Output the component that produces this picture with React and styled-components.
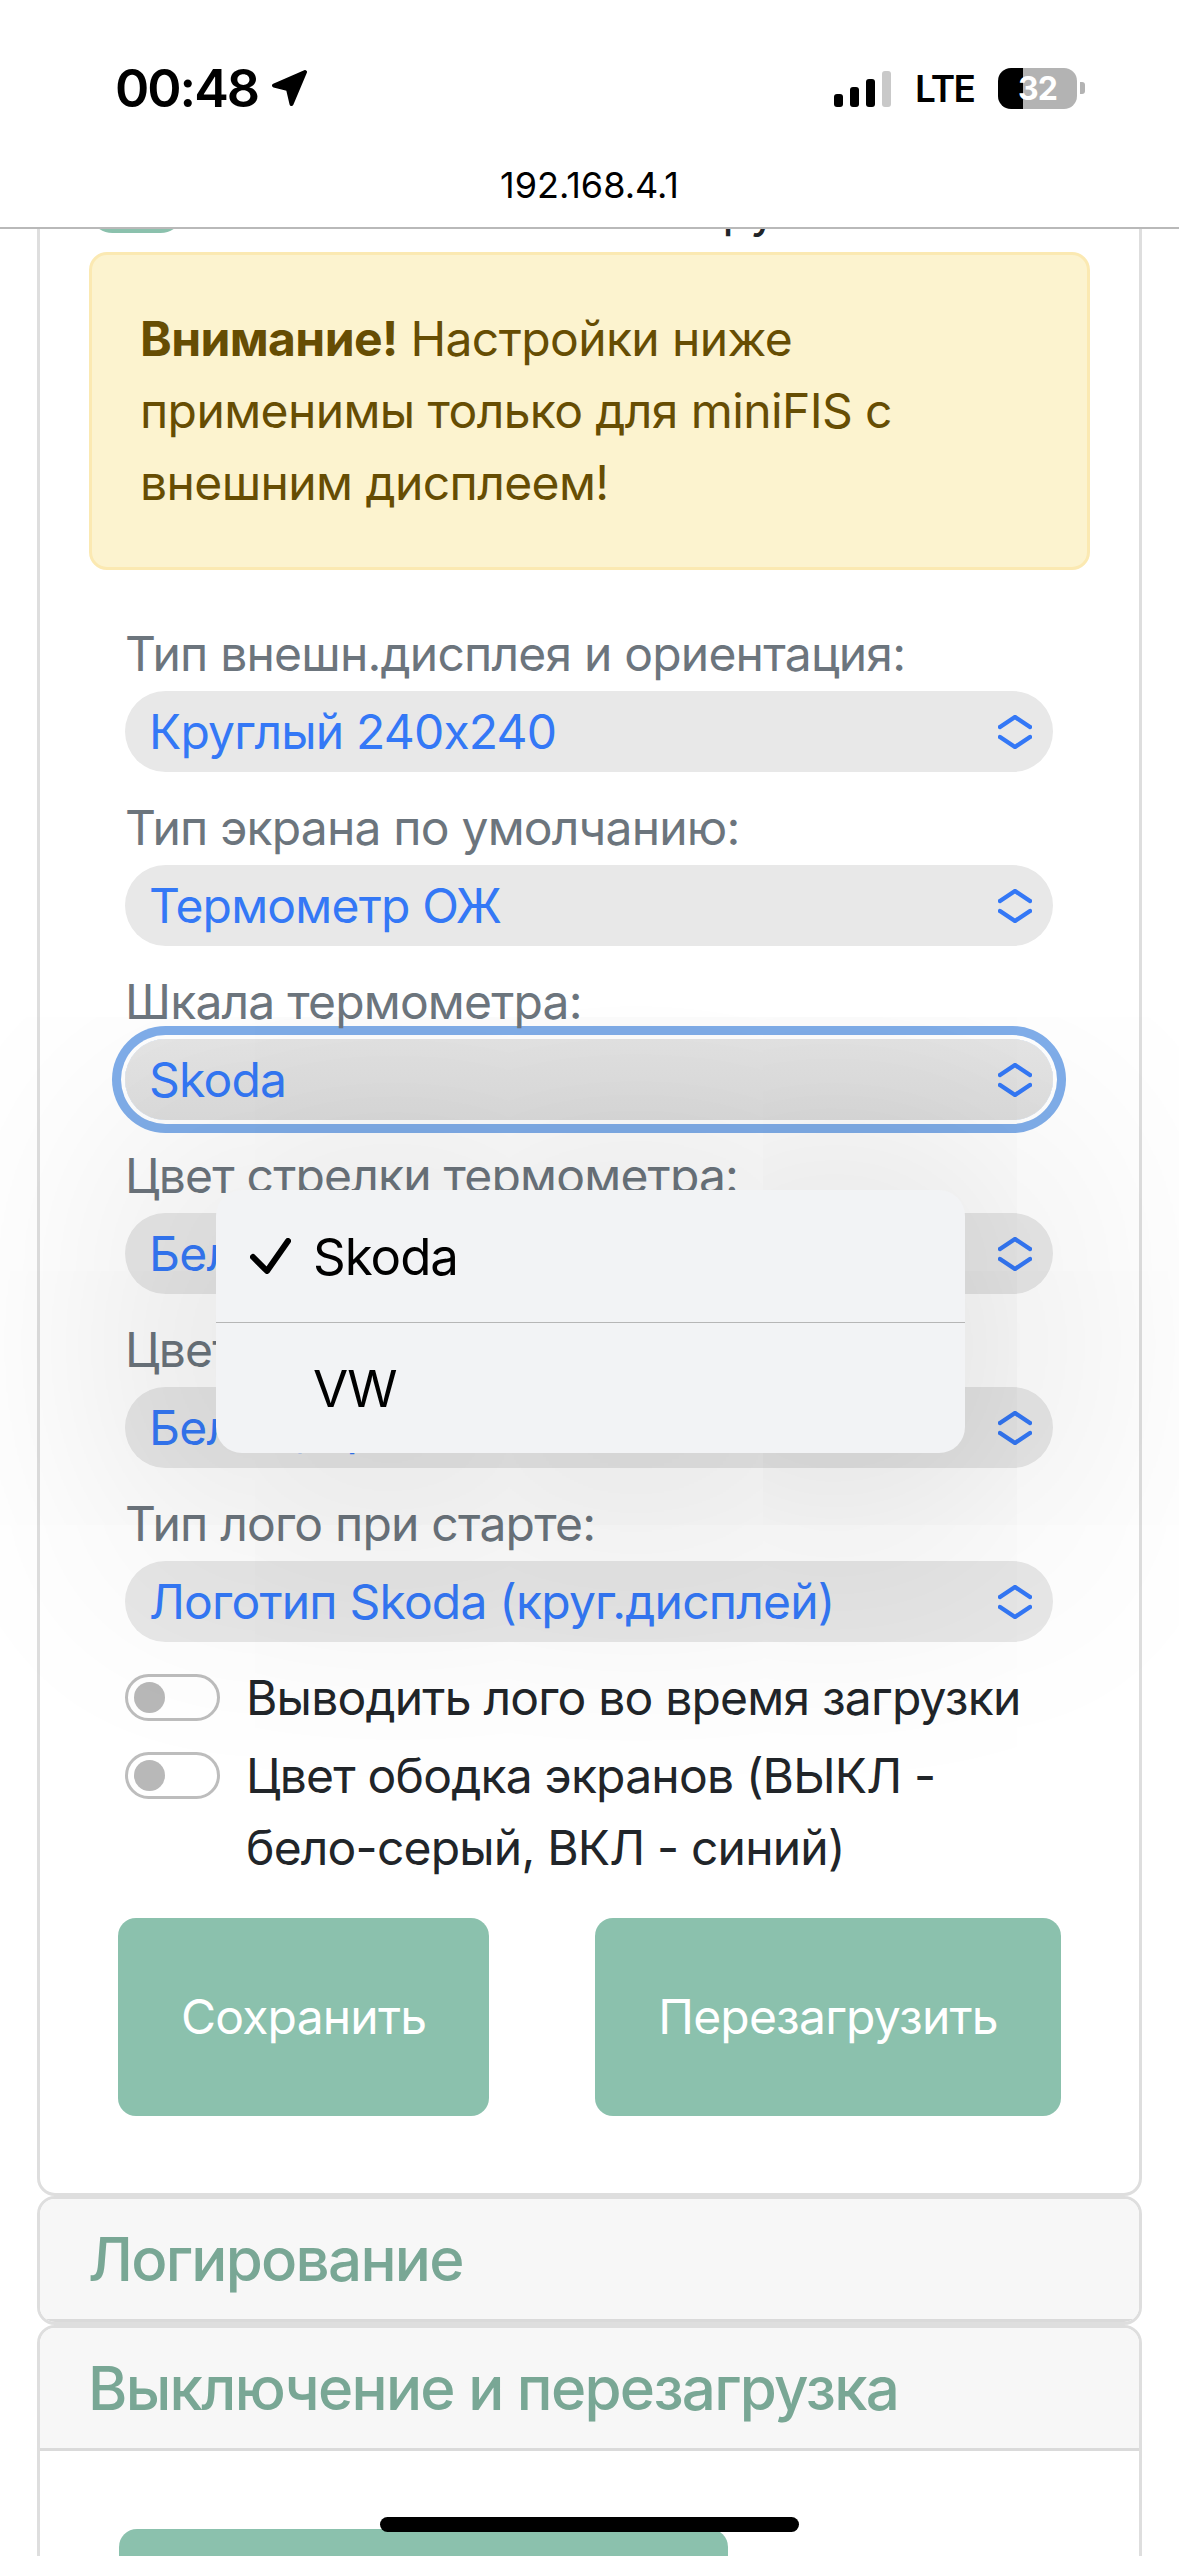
import styled, { createGlobalStyle, css } from "styled-components"

const GlobalStyle = createGlobalStyle`
  * { box-sizing: border-box; }
  html, body { margin: 0; padding: 0; background: #fff; }
  body {
    font-family: Inter, "Noto Sans", sans-serif;
    -webkit-font-smoothing: antialiased;
  }
`

const Screen = styled.div`
  position: relative;
  width: 1179px;
  height: 2556px;
  overflow: hidden;
  display: flex;
  flex-direction: column;
  background: #fff;
`

const TopBar = styled.header`
  position: relative;
  z-index: 2;
  flex: none;
  height: 229px;
  background: #fff;
  border-bottom: 2px solid #b9b9b9;
  display: flex;
  flex-direction: column;
`

const StatusRow = styled.div`
  height: 56px;
  margin-top: 60px;
  display: flex;
  align-items: center;
  justify-content: space-between;
  padding: 0 94px 0 115px;
`

const Clock = styled.div`
  display: flex;
  align-items: center;
  gap: 12px;
  font-size: 52px;
  font-weight: 600;
  letter-spacing: -2px;
  color: #000;
`

const Indicators = styled.div`
  display: flex;
  align-items: center;
  gap: 24px;
`

const Bars = styled.div`
  display: flex;
  align-items: flex-end;
  gap: 7px;
  height: 37px;
`

const Bar = styled.span`
  width: 9px;
  height: ${(p) => p.$h}px;
  border-radius: 3px;
  background: ${(p) => (p.$off ? "#c9c9c9" : "#000")};
`

const Net = styled.span`
  font-size: 37px;
  font-weight: 600;
  letter-spacing: -1.8px;
  color: #000;
`

const Battery = styled.div`
  display: flex;
  align-items: center;
  gap: 3px;
`

const BatteryBody = styled.div`
  width: 79px;
  height: 41px;
  border-radius: 13px;
  background: linear-gradient(to right, #000 32%, #b3b3b3 32%);
  display: flex;
  align-items: center;
  justify-content: center;
  color: #fff;
  font-size: 32px;
  font-weight: 700;
  letter-spacing: -1px;
`

const BatteryNub = styled.span`
  width: 5px;
  height: 12px;
  border-radius: 0 3px 3px 0;
  background: #b3b3b3;
`

const Url = styled.div`
  margin-top: 47px;
  text-align: center;
  font-size: 36px;
  line-height: 44px;
  color: #000;
`

const Viewport = styled.main`
  flex: 1;
  overflow: hidden;
  letter-spacing: -0.8px;
`

const Scroll = styled.div`
  margin-top: -106px;
`

const Card = styled.section`
  margin: 0 37px;
  border: 3px solid #dedede;
  border-radius: 18px;
  background: #fff;
`

const CardBody = styled.div`
  padding: 48px 49px;
`

const CheckRow = styled.label`
  display: flex;
  align-items: flex-start;
  gap: 26px;
  margin-bottom: 6px;
  font-size: 48px;
  line-height: 72px;
  color: #212529;
`

const Switch = styled.span`
  flex: none;
  width: 95px;
  height: 47px;
  margin-top: 12px;
  padding: 0 6px;
  border-radius: 24px;
  border: 3px solid ${(p) => (p.$on ? "#8bc1ad" : "#bdbdbd")};
  background: ${(p) => (p.$on ? "#8bc1ad" : "#fff")};
  display: flex;
  align-items: center;
  justify-content: ${(p) => (p.$on ? "flex-end" : "flex-start")};

  &::after {
    content: "";
    width: 31px;
    height: 31px;
    border-radius: 50%;
    background: ${(p) => (p.$on ? "#fff" : "#b8b8b8")};
  }
`

const Alert = styled.div`
  margin-bottom: 48px;
  padding: 48px;
  border: 3px solid #fbe9b2;
  border-radius: 18px;
  background: #fcf3cf;
  color: #664d03;
  font-size: 48px;
  line-height: 72px;
  letter-spacing: -0.6px;

  b {
    font-weight: 700;
  }
`

const Form = styled.div`
  padding: 0 37px 0 36px;
`

const Group = styled.div`
  margin-bottom: 20px;
`

const Label = styled.div`
  margin-bottom: 1px;
  font-size: 48px;
  line-height: 72px;
  color: #6c757d;
`

const Select = styled.div`
  height: 81px;
  padding: 0 21px 0 24px;
  border-radius: 41px;
  background: #e8e8e8;
  display: flex;
  align-items: center;
  justify-content: space-between;
  font-size: 48px;
  color: #3478f6;
  white-space: nowrap;

  ${(p) =>
    p.$focus &&
    css`
      background: linear-gradient(#e6e6e6, #dedede);
      box-shadow: 0 0 0 4px #fff, 0 0 0 13px #80aeea;
    `}
`

const ButtonRow = styled.div`
  display: flex;
  gap: 106px;
  margin: 34px -7px 29px;
`

const Button = styled.button`
  border: 0;
  border-radius: 18px;
  background: #8bc1ad;
  color: #fff;
  font-family: inherit;
  font-size: 48px;
  line-height: 72px;
  letter-spacing: inherit;
  padding: 63px 63px;
  width: ${(p) => (p.$w ? `${p.$w}px` : "auto")};
`

const AccItem = styled.section`
  margin: 0 37px;
  border: 3px solid #dedede;
  border-radius: 18px;
  overflow: hidden;
  background: #fff;
`

const AccHeader = styled.div`
  padding: 24px 48px;
  background: #f7f7f7;
  border-bottom: 3px solid #dadada;
  font-size: 60px;
  line-height: 72px;
  font-weight: 500;
  letter-spacing: -1.7px;
  color: #79a795;
`

const AccBody = styled.div`
  padding: 78px 79px 48px;
`

const Picker = styled.div`
  position: absolute;
  z-index: 4;
  top: 1190px;
  left: 216px;
  width: 749px;
  border-radius: 26px;
  background: #f2f3f5;
  box-shadow: 0 20px 260px 80px rgba(0, 0, 0, 0.12);
`

const PickerItem = styled.div`
  height: ${(p) => (p.$first ? 132 : 131)}px;
  display: flex;
  align-items: center;
  gap: 22px;
  padding-left: 34px;
  font-size: 51px;
  letter-spacing: -1px;
  color: #000;
  border-top: ${(p) => (p.$first ? "none" : "1px solid #b6b6b6")};
`

const CheckSlot = styled.span`
  width: 41px;
  height: 36px;
  display: flex;
`

const HomeBar = styled.div`
  position: absolute;
  z-index: 5;
  bottom: 24px;
  left: 380px;
  width: 419px;
  height: 15px;
  border-radius: 8px;
  background: #000;
`

const Chevrons = () => (
  <svg width="34" height="34" viewBox="0 0 34 34" fill="none">
    <path
      d="M2 12 L17 2 L32 12 M2 22 L17 32 L32 22"
      stroke="#3478f6"
      strokeWidth="4.5"
      strokeLinecap="round"
      strokeLinejoin="round"
    />
  </svg>
)

const LocationArrow = () => (
  <svg width="38" height="37" viewBox="0 0 38 37">
    <path
      d="M35 2 L4 15.5 L18 19 L21.5 34 Z"
      fill="#000"
      stroke="#000"
      strokeWidth="4"
      strokeLinejoin="round"
    />
  </svg>
)

const Check = () => (
  <svg width="41" height="36" viewBox="0 0 41 36" fill="none">
    <path
      d="M3 19 L17 33 L38 3"
      stroke="#000"
      strokeWidth="6"
      strokeLinecap="round"
      strokeLinejoin="round"
    />
  </svg>
)

const fields = [
  { label: "Тип внешн.дисплея и ориентация:", value: "Круглый 240x240" },
  { label: "Тип экрана по умолчанию:", value: "Термометр ОЖ" },
  { label: "Шкала термометра:", value: "Skoda", focus: true },
  { label: "Цвет стрелки термометра:", value: "Белый" },
  { label: "Цвет шкалы термометра:", value: "Белый, красная зона" },
  { label: "Тип лого при старте:", value: "Логотип Skoda (круг.дисплей)" },
]

const App = () => {
  return (
    <Screen>
      <GlobalStyle />
      <TopBar>
        <StatusRow>
          <Clock>
            00:48
            <LocationArrow />
          </Clock>
          <Indicators>
            <Bars>
              <Bar $h={13} />
              <Bar $h={20} />
              <Bar $h={28} />
              <Bar $h={36} $off />
            </Bars>
            <Net>LTE</Net>
            <Battery>
              <BatteryBody>32</BatteryBody>
              <BatteryNub />
            </Battery>
          </Indicators>
        </StatusRow>
        <Url>192.168.4.1</Url>
      </TopBar>

      <Viewport>
        <Scroll>
          <Card>
            <CardBody>
              <CheckRow>
                <Switch $on />
                Выключить значок загрузки
              </CheckRow>
              <Alert>
                <b>Внимание!</b> Настройки ниже применимы только для miniFIS с
                внешним дисплеем!
              </Alert>
              <Form>
                {fields.map((f) => (
                  <Group key={f.label}>
                    <Label>{f.label}</Label>
                    <Select $focus={f.focus}>
                      {f.value}
                      <Chevrons />
                    </Select>
                  </Group>
                ))}
                <CheckRow>
                  <Switch />
                  Выводить лого во время загрузки
                </CheckRow>
                <CheckRow>
                  <Switch />
                  Цвет ободка экранов (ВЫКЛ - бело-серый, ВКЛ - синий)
                </CheckRow>
                <ButtonRow>
                  <Button>Сохранить</Button>
                  <Button>Перезагрузить</Button>
                </ButtonRow>
              </Form>
            </CardBody>
          </Card>
          <AccItem>
            <AccHeader>Логирование</AccHeader>
          </AccItem>
          <AccItem>
            <AccHeader>Выключение и перезагрузка</AccHeader>
            <AccBody>
              <Button $w={609}>Выключить устройство</Button>
            </AccBody>
          </AccItem>
        </Scroll>
      </Viewport>

      <Picker>
        <PickerItem $first>
          <CheckSlot>
            <Check />
          </CheckSlot>
          Skoda
        </PickerItem>
        <PickerItem>
          <CheckSlot />
          VW
        </PickerItem>
      </Picker>

      <HomeBar />
    </Screen>
  )
}

export default App
